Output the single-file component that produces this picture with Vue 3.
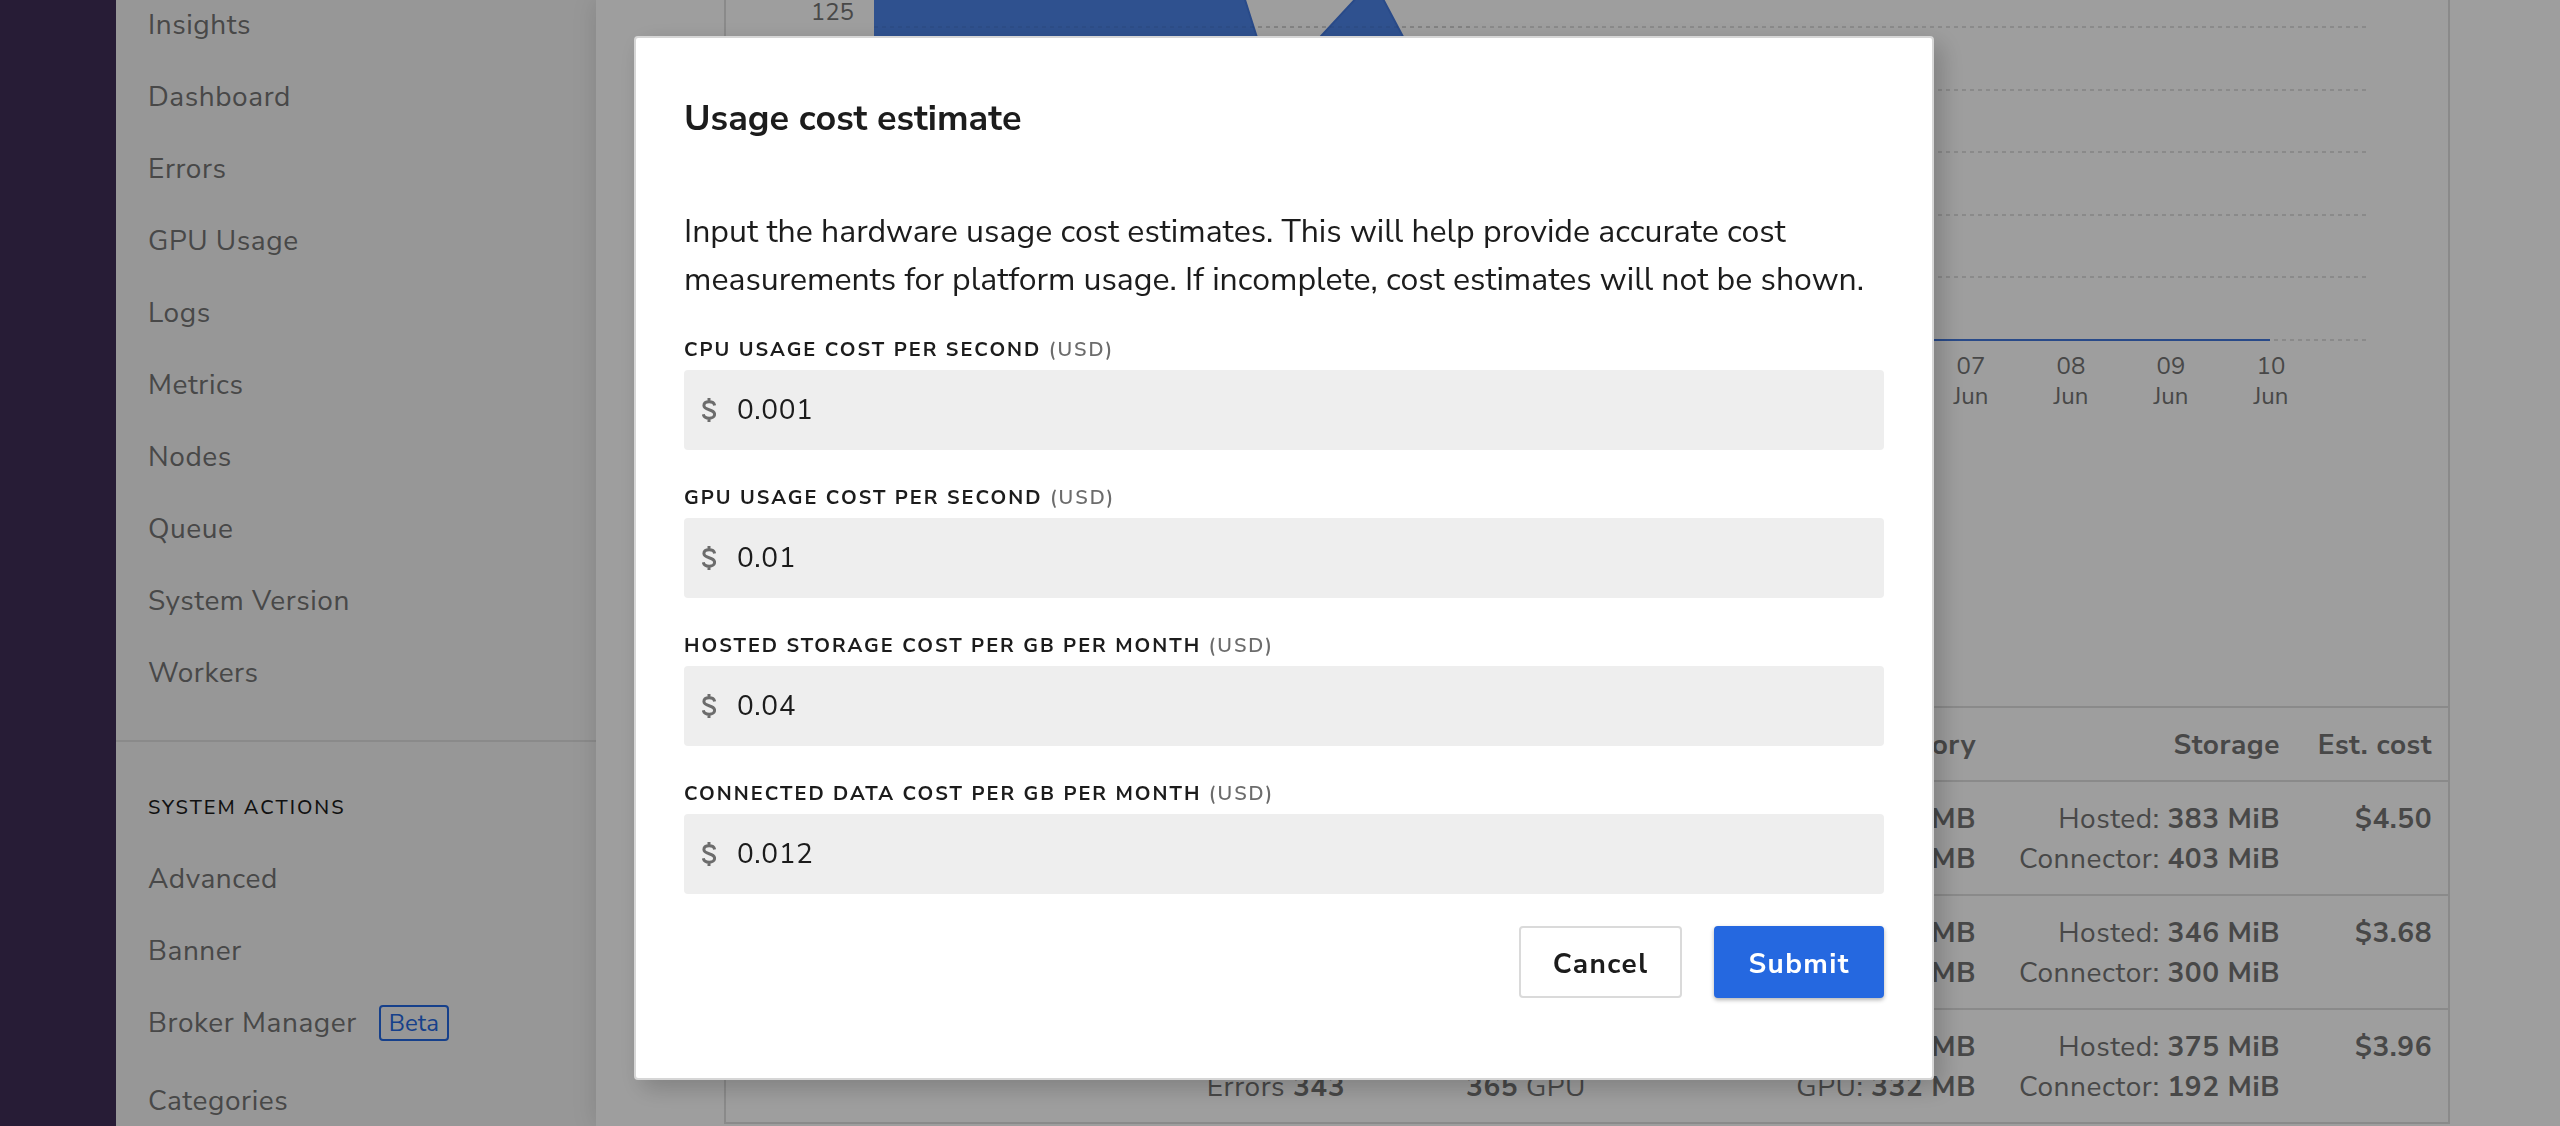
<script setup>
import { reactive } from 'vue'

const insights = ['Insights', 'Dashboard', 'Errors', 'GPU Usage', 'Logs', 'Metrics', 'Nodes', 'Queue', 'System Version', 'Workers']
const actions = [
  { label: 'Advanced' },
  { label: 'Banner' },
  { label: 'Broker Manager', badge: 'Beta' },
  { label: 'Categories' },
]

const gridLines = [27, 90, 152, 215, 277, 340]
const days = [
  { label: '07', x: 1245 },
  { label: '08', x: 1345 },
  { label: '09', x: 1445 },
  { label: '10', x: 1545 },
]

const rows = [
  { hosted: '383 MiB', connector: '403 MiB', cost: '$4.50' },
  { hosted: '346 MiB', connector: '300 MiB', cost: '$3.68' },
  { errors: '343', gpus: '365', gpuMemory: '332', hosted: '375 MiB', connector: '192 MiB', cost: '$3.96' },
]

const fields = reactive([
  { id: 'cpu', label: 'CPU usage cost per second', value: '0.001' },
  { id: 'gpu', label: 'GPU usage cost per second', value: '0.01' },
  { id: 'hosted', label: 'Hosted storage cost per GB per month', value: '0.04' },
  { id: 'connected', label: 'Connected data cost per GB per month', value: '0.012' },
])
</script>

<template>
  <div class="app">
    <div class="rail"></div>

    <aside class="sidebar">
      <nav>
        <ul class="links">
          <li v-for="item in insights" :key="item"><a href="#">{{ item }}</a></li>
        </ul>
      </nav>
      <nav class="section">
        <h3>System actions</h3>
        <ul class="links">
          <li v-for="item in actions" :key="item.label">
            <a href="#">{{ item.label }}</a>
            <span v-if="item.badge" class="badge">{{ item.badge }}</span>
          </li>
        </ul>
      </nav>
    </aside>

    <main class="main">
      <section class="card">
        <svg class="chart" viewBox="0 0 1722 706">
          <line v-for="y in gridLines" :key="y" class="grid" x1="148" x2="1640" :y1="y" :y2="y" />
          <path class="area" d="M148 340V-60H500L547 88L647 -20L747 169L847 340Z" />
          <path class="line" d="M500 -60L547 88L647 -20L747 169L847 340H1544" />
          <line class="grid over" x1="148" x2="747" y1="27" y2="27" />
          <text class="tick end" x="128" y="20">125</text>
          <g v-for="d in days" :key="d.label">
            <text class="tick" :x="d.x" y="374">{{ d.label }}</text>
            <text class="tick" :x="d.x" y="404">Jun</text>
          </g>
        </svg>

        <table class="usage">
          <colgroup>
            <col />
            <col class="c-gpu" />
            <col class="c-memory" />
            <col class="c-storage" />
            <col class="c-cost" />
          </colgroup>
          <thead>
            <tr>
              <th></th>
              <th></th>
              <th>Memory</th>
              <th>Storage</th>
              <th>Est. cost</th>
            </tr>
          </thead>
          <tbody>
            <tr v-for="row in rows" :key="row.cost">
              <td><br /><template v-if="row.errors">Errors <b>{{ row.errors }}</b></template></td>
              <td><br /><template v-if="row.gpus"><b>{{ row.gpus }}</b> GPU</template></td>
              <td><b>MB</b><br /><template v-if="row.gpuMemory">GPU: </template><b>{{ row.gpuMemory }} MB</b></td>
              <td>Hosted: <b>{{ row.hosted }}</b><br />Connector: <b>{{ row.connector }}</b></td>
              <td><b>{{ row.cost }}</b></td>
            </tr>
          </tbody>
        </table>
      </section>
    </main>

    <div class="overlay">
      <form class="dialog" role="dialog" aria-labelledby="dialog-title" @submit.prevent>
        <h2 id="dialog-title">Usage cost estimate</h2>
        <p>
          Input the hardware usage cost estimates. This will help provide accurate cost
          measurements for platform usage. If incomplete, cost estimates will not be shown.
        </p>
        <div v-for="f in fields" :key="f.id" class="field">
          <label :for="f.id">{{ f.label }} <span>(USD)</span></label>
          <div class="control">
            <svg class="dollar" viewBox="0 0 14 24" aria-hidden="true">
              <path d="M7 0V4M7 20V24M12.6 7.4C12.2 5 10 3.8 7.1 3.8C4 3.8 1.9 5.3 1.9 7.6C1.9 13 12.6 10.4 12.6 16.2C12.6 18.6 10.3 20.2 7.2 20.2C4 20.2 1.7 18.8 1.3 16.2" />
            </svg>
            <input :id="f.id" v-model="f.value" type="text" />
          </div>
        </div>
        <div class="buttons">
          <button type="button" class="btn">Cancel</button>
          <button type="submit" class="btn primary">Submit</button>
        </div>
      </form>
    </div>
  </div>
</template>

<style>
body {
  margin: 0;
  background: #fff;
}
</style>

<style scoped>
* {
  box-sizing: border-box;
}
.app {
  display: flex;
  height: 100vh;
  overflow: hidden;
  font-family: "Nunito Sans", Nunito, "Open Sans", sans-serif;
  font-size: 28px;
  letter-spacing: 0.02em;
  color: #747474;
}
.rail {
  flex: 0 0 116px;
  background: #3f2e58;
}

/* Sidebar */
.sidebar {
  flex: 0 0 480px;
  background: #f4f4f4;
  overflow: hidden;
  padding-top: 7px;
}
.links {
  list-style: none;
  margin: 0;
  padding: 0 32px;
  display: flex;
  flex-direction: column;
  gap: 36px;
}
.links li {
  display: flex;
  align-items: flex-start;
  gap: 22px;
  line-height: 36px;
}
.links a {
  color: inherit;
  text-decoration: none;
}
.badge {
  height: 36px;
  margin-bottom: 6px;
  padding: 0 8px;
  border: 2px solid #2568e0;
  border-radius: 4px;
  color: #2568e0;
  font-size: 24px;
  line-height: 32px;
  letter-spacing: normal;
}
.section {
  margin-top: 49px;
  border-top: 2px solid #dfdfdf;
  padding-top: 52px;
}
.section h3 {
  margin: 0 0 39px;
  padding: 0 32px;
  font-size: 20px;
  font-weight: 500;
  line-height: 28px;
  letter-spacing: 2px;
  text-transform: uppercase;
  color: #1c1c1c;
}

/* Page content */
.main {
  flex: 1;
  min-width: 0;
  padding: 0 110px 0 128px;
  background: #fff;
  box-shadow: 0 0 24px rgba(0, 0, 0, 0.12);
}
.card {
  border: solid #dfdfdf;
  border-width: 0 2px;
}
.chart {
  display: block;
  width: 100%;
}
.grid {
  stroke: #dfdfdf;
  stroke-width: 2;
  stroke-dasharray: 4 4;
}
.over {
  stroke: #000;
  opacity: 0.05;
}
.area {
  fill: #4d84e7;
}
.line {
  fill: none;
  stroke: #4378dd;
  stroke-width: 2;
}
.tick {
  fill: #747474;
  font-size: 24px;
  letter-spacing: normal;
  text-anchor: middle;
}
.end {
  text-anchor: end;
}
.usage {
  width: 100%;
  table-layout: fixed;
  border-spacing: 0;
  border-top: 2px solid #dfdfdf;
  line-height: 40px;
  text-align: right;
}
.c-gpu {
  width: 241px;
}
.c-memory {
  width: 390px;
}
.c-storage {
  width: 304px;
}
.c-cost {
  width: 152px;
}
.usage th,
.usage td {
  padding: 17px 16px 15px 0;
  border-bottom: 2px solid #dfdfdf;
  vertical-align: top;
  white-space: nowrap;
}
.usage th,
.usage b {
  font-weight: 700;
}

/* Dialog */
.overlay {
  position: fixed;
  inset: 0;
  display: flex;
  justify-content: center;
  align-items: flex-start;
  padding: 36px 0 0 8px;
  background: rgba(0, 0, 0, 0.38);
}
.dialog {
  width: 1300px;
  max-width: 100%;
  padding: 57px 48px 80px;
  border: 2px solid #d6d6d6;
  border-radius: 4px;
  background: #fff;
  box-shadow: 8px 8px 24px rgba(0, 0, 0, 0.2);
  color: #1c1c1c;
}
.dialog h2 {
  margin: 0;
  font-size: 36px;
  font-weight: 700;
  line-height: 48px;
  letter-spacing: normal;
}
.dialog p {
  margin: 65px 0 30px;
  font-size: 32px;
  line-height: 48px;
  letter-spacing: normal;
}
.field {
  margin-bottom: 32px;
}
.field label {
  display: block;
  margin-bottom: 4px;
  font-size: 20px;
  font-weight: 700;
  line-height: 32px;
  letter-spacing: 2px;
  text-transform: uppercase;
}
.field label span {
  font-weight: 600;
  color: #6c6c6c;
}
.control {
  display: flex;
  align-items: center;
  gap: 21px;
  height: 80px;
  padding: 0 18px;
  border-radius: 4px;
  background: #eee;
}
.dollar {
  flex: none;
  width: 14px;
  height: 24px;
  fill: none;
  stroke: #6c6c6c;
  stroke-width: 3;
}
.control input {
  flex: 1;
  min-width: 0;
  height: 100%;
  padding: 0;
  border: 0;
  outline: 0;
  background: none;
  font: inherit;
  letter-spacing: inherit;
  color: #1c1c1c;
}
.buttons {
  display: flex;
  justify-content: flex-end;
  gap: 32px;
}
.btn {
  height: 72px;
  padding: 4px 32px 0;
  border: 2px solid #dadada;
  border-radius: 4px;
  background: #fff;
  font: inherit;
  font-weight: 700;
  letter-spacing: 0.05em;
  color: #1c1c1c;
}
.primary {
  border-color: #2568e0;
  background: #2568e0;
  color: #fff;
  box-shadow: 0 2px 4px rgba(0, 0, 0, 0.3);
}
</style>
